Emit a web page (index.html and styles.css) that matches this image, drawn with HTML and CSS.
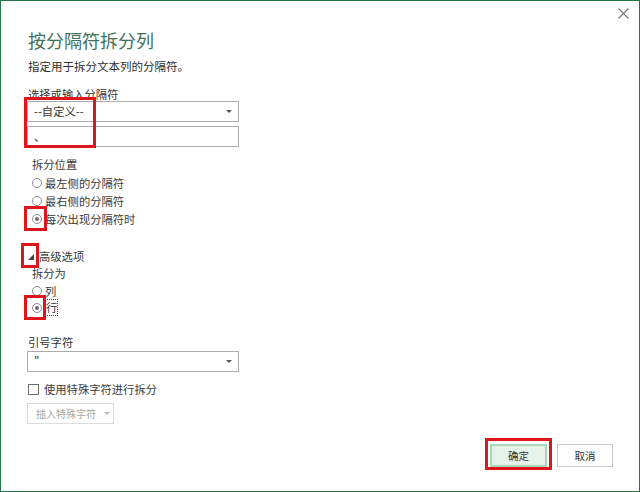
FILE: index.html
```html
<!DOCTYPE html>
<html lang="zh-CN">
<head>
<meta charset="utf-8">
<title>按分隔符拆分列</title>
<link rel="stylesheet" href="styles.css">
</head>
<body>
<div class="dialog">
  <button class="close" aria-label="关闭">
    <svg width="11" height="11" viewBox="0 0 11 11"><path d="M0.5 0.5 L10.5 10.5 M10.5 0.5 L0.5 10.5" stroke="#7a7a7a" stroke-width="1.2" fill="none"/></svg>
  </button>
  <h1 class="title">按分隔符拆分列</h1>
  <p class="subtitle">指定用于拆分文本列的分隔符。</p>
  <div class="label label-sep">选择或输入分隔符</div>
  <div class="select select-first"><span>--自定义--</span><span class="arrow"></span></div>
  <div class="input"><span>、</span></div>

  <div class="indent">
    <div class="group-label pos-label">拆分位置</div>
    <div class="radios radios-pos">
      <div class="radio-row"><span class="radio"></span><span>最左侧的分隔符</span></div>
      <div class="radio-row"><span class="radio"></span><span>最右侧的分隔符</span></div>
      <div class="radio-row"><span class="radio checked"></span><span>每次出现分隔符时</span></div>
    </div>
  </div>

  <div class="adv-row">
    <svg class="tri" width="6" height="6" viewBox="0 0 6 6"><polygon points="6,0 6,6 0,6" fill="#444"/></svg>
    <span>高级选项</span>
  </div>
  <div class="indent">
    <div class="group-label split-label">拆分为</div>
    <div class="radios radios-split">
      <div class="radio-row small"><span class="radio"></span><span>列</span></div>
      <div class="radio-row small"><span class="radio checked"></span><span class="focus">行</span></div>
    </div>
  </div>

  <div class="label label-quote">引号字符</div>
  <div class="select select-quote"><span>"</span><span class="arrow"></span></div>

  <div class="check-row"><span class="checkbox"></span><span>使用特殊字符进行拆分</span></div>
  <div class="insert-btn"><span>插入特殊字符</span><span class="arrow light"></span></div>

  <div class="footer">
    <div class="btn btn-ok">确定</div>
    <div class="btn">取消</div>
  </div>

  <div class="mark mark-1"></div>
  <div class="mark mark-2"></div>
  <div class="mark mark-3"></div>
  <div class="mark mark-4"></div>
  <div class="mark mark-5"></div>
</div>
</body>
</html>
```

FILE: styles.css
```css
* { box-sizing: border-box; }
html, body { margin: 0; padding: 0; background: #fff; }
body {
  font-family: "Noto Sans CJK SC", "Noto Sans", "Liberation Sans", sans-serif;
  font-size: 11.3px;
  color: #3a3a3a;
}
.dialog {
  position: relative;
  width: 640px;
  height: 492px;
  border: 1px solid #23744b;
  padding: 0 26px 0 26px;
  display: flex;
  flex-direction: column;
  align-items: flex-start;
  overflow: hidden;
}
.close {
  position: absolute;
  top: 6px;
  right: 9px;
  width: 13px;
  height: 13px;
  padding: 1px;
  border: 0;
  background: transparent;
  line-height: 0;
}
.title {
  margin: 25px 0 0 1px;
  height: 28px;
  line-height: 28px;
  font-size: 18px;
  font-weight: 400;
  color: #3f715b;
}
.subtitle {
  margin: 3px 0 0 1px;
  height: 18px;
  line-height: 18px;
  font-size: 11.5px;
  color: #2e2e2e;
}
.label {
  margin-left: 1px;
  height: 14px;
  line-height: 14px;
  color: #333;
}
.label-sep { margin-top: 12px; }
.select, .input {
  width: 212px;
  height: 21px;
  border: 1px solid #acacac;
  display: flex;
  align-items: center;
  justify-content: space-between;
  padding: 0 6px 0 6px;
  line-height: 19px;
  color: #333;
  background: #fff;
}
.input { margin-top: 4px; }
.arrow {
  width: 0;
  height: 0;
  border-left: 3px solid transparent;
  border-right: 3px solid transparent;
  border-top: 3px solid #555;
}
.arrow.light { border-top-color: #b8b8b8; }
.indent { padding-left: 5px; display: flex; flex-direction: column; }
.group-label { height: 18px; line-height: 18px; }
.pos-label { margin-top: 8px; }
.split-label { height: 16px; line-height: 16px; }
.radios { display: flex; flex-direction: column; }
.radios-pos { margin-top: 1px; }
.radios-split { margin-top: 1px; }
.radio-row {
  height: 18px;
  display: flex;
  align-items: center;
  gap: 3px;
  line-height: 16px;
}
.radio-row.small { height: 17px; }
.radio {
  width: 10px;
  height: 10px;
  border-radius: 50%;
  border: 1px solid #8c8c8c;
  background: #fff;
  position: relative;
  flex: none;
}
.radio.checked::after {
  content: "";
  position: absolute;
  left: 2px;
  top: 2px;
  width: 4px;
  height: 4px;
  border-radius: 50%;
  background: #6a6a6a;
}
.focus {
  outline: 1px dotted #444;
  outline-offset: 0;
  padding: 0 0 0 1px;
  line-height: 15px;
}
.adv-row {
  margin-top: 19px;
  height: 18px;
  display: flex;
  align-items: center;
  gap: 5px;
  padding-left: 1px;
}
.tri { flex: none; margin-top: 1px; }
.label-quote { margin-top: 18px; height: 16px; line-height: 16px; }
.select-quote { margin-top: 1px; }
.check-row {
  margin-top: 8px;
  height: 18px;
  display: flex;
  align-items: center;
  gap: 5px;
  padding-left: 1px;
}
.checkbox {
  width: 11px;
  height: 11px;
  border: 1px solid #6f6f6f;
  background: #fff;
  flex: none;
}
.insert-btn {
  margin-top: 5px;
  width: 87px;
  height: 21px;
  border: 1px solid #dcdcdc;
  display: flex;
  align-items: center;
  gap: 8px;
  padding-left: 8px;
  color: #a6a6a6;
  font-size: 10px;
  line-height: 19px;
  white-space: nowrap;
}
.footer {
  margin-top: auto;
  align-self: flex-end;
  display: flex;
  gap: 10px;
  padding-bottom: 24px;
}
.btn {
  width: 56px;
  height: 23px;
  border: 1px solid #c9c9c9;
  background: #fff;
  display: flex;
  align-items: center;
  justify-content: center;
  color: #333;
  font-size: 10.5px;
  line-height: 21px;
}
.btn-ok {
  width: 57px;
  background: #e5f2e9;
  border: 2px solid #a9d7b8;
}
.mark {
  position: absolute;
  border: 3px solid #e0141d;
  pointer-events: none;
}
.mark-1 { left: 23px; top: 96px; width: 72px; height: 51px; }
.mark-2 { left: 23px; top: 205px; width: 23px; height: 25px; }
.mark-3 { left: 20px; top: 242px; width: 18px; height: 25px; }
.mark-4 { left: 23px; top: 294px; width: 22px; height: 25px; }
.mark-5 { left: 484px; top: 437px; width: 67px; height: 32px; }
```
